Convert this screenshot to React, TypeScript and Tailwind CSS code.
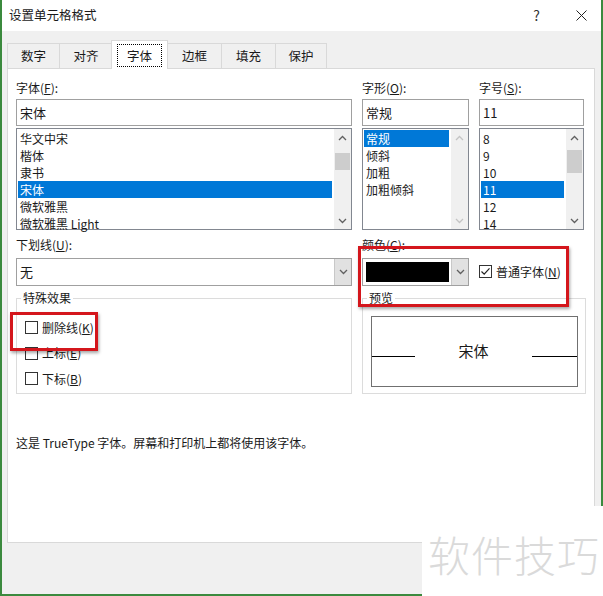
import React from 'react';

const FONT = "font-['Noto_Sans_CJK_SC',sans-serif]";

function Chevron({ up, enabled }: { up?: boolean; enabled: boolean }) {
  return (
    <svg width="9" height="6" viewBox="0 0 9 6" className="shrink-0">
      <polyline
        points={up ? '1,5 4.5,1.5 8,5' : '1,1 4.5,4.5 8,1'}
        fill="none"
        stroke={enabled ? '#606060' : '#c4c4c4'}
        strokeWidth="1.3"
      />
    </svg>
  );
}

function ScrollBar({ enabled, gap, thumb }: { enabled: boolean; gap: number; thumb: number }) {
  return (
    <div className="w-[17px] h-full bg-[#f0f0f0] flex flex-col">
      <div className="h-[17px] flex items-center justify-center">
        <Chevron up enabled={enabled} />
      </div>
      {enabled && (
        <>
          <div style={{ height: gap }} />
          <div className="mx-[1px] bg-[#cdcdcd]" style={{ height: thumb }} />
        </>
      )}
      <div className="flex-1" />
      <div className="h-[17px] flex items-center justify-center">
        <Chevron enabled={enabled} />
      </div>
    </div>
  );
}

function ListBox({
  items,
  selected,
  enabled,
  gap,
  thumb,
}: {
  items: string[];
  selected: number;
  enabled: boolean;
  gap: number;
  thumb: number;
}) {
  return (
    <div className="mt-[2px] h-[102px] border border-[#828790] bg-white flex">
      <div className="flex-1 pl-[1px] pr-[2px] pt-[1px]">
        {items.map((it, i) => (
          <div
            key={it}
            className={`h-[17px] pl-[2px] text-[12px] leading-[17px] whitespace-nowrap overflow-hidden ${
              i === selected ? 'bg-[#0078d7] text-white' : 'text-[#1a1a1a]'
            }`}
          >
            {it}
          </div>
        ))}
      </div>
      <ScrollBar enabled={enabled} gap={gap} thumb={thumb} />
    </div>
  );
}

function TextBox({ value }: { value: string }) {
  return (
    <div className="mt-[3px] h-[27px] border border-[#a0a0a0] bg-white pl-[3px] text-[13px] leading-[25px] text-[#1a1a1a]">
      {value}
    </div>
  );
}

function Label({ text, hot }: { text: string; hot: string }) {
  return (
    <div className="h-[16px] text-[12px] leading-[16px] text-[#1a1a1a] whitespace-nowrap">
      {text}(<span className="underline">{hot}</span>):
    </div>
  );
}

function CheckBox({ checked, text, hot, className }: { checked?: boolean; text: string; hot: string; className?: string }) {
  return (
    <div className={`h-[17px] flex items-center gap-[4px] text-[12px] text-[#1a1a1a] ${className ?? ''}`}>
      <div className="w-[13px] h-[13px] border border-[#333333] bg-white flex items-center justify-center">
        {checked && (
          <svg width="11" height="11" viewBox="0 0 11 11">
            <polyline points="1.5,5.5 4.2,8.2 9.5,2.3" fill="none" stroke="#222" strokeWidth="1.2" />
          </svg>
        )}
      </div>
      <span>
        {text}(<span className="underline">{hot}</span>)
      </span>
    </div>
  );
}

function DropArrow() {
  return (
    <div className="w-[17px] h-full bg-[#e1e1e1] border-l border-[#c8c8c8] flex items-center justify-center">
      <Chevron enabled />
    </div>
  );
}

const tabs = ['数字', '对齐', '字体', '边框', '填充', '保护'];
const tabWidths = [52, 53, 57, 54, 54, 52];

export default function App() {
  return (
    <div className={`relative w-[603px] h-[596px] bg-[#f0f0f0] border-x-2 border-b-2 border-[#3b8a3e] flex flex-col ${FONT}`}>
      {/* title bar */}
      <div className="h-[31px] bg-white flex items-center pl-[7px] pr-[14px]">
        <span className="text-[12.5px] text-[#1a1a1a]">设置单元格格式</span>
        <div className="flex-1" />
        <span className="text-[14px] text-[#333] mr-[36px]">?</span>
        <svg width="11" height="11" viewBox="0 0 11 11">
          <path d="M0.5 0.5 L10.5 10.5 M10.5 0.5 L0.5 10.5" stroke="#222" strokeWidth="1" />
        </svg>
      </div>

      {/* tabs */}
      <div className="mt-[12px] ml-[5px] h-[25px] flex items-end relative z-10">
        {tabs.map((t, i) =>
          i === 2 ? (
            <div
              key={t}
              style={{ width: tabWidths[i] }}
              className="h-[29px] -mb-[1px] -mx-[1px] bg-white border-x border-t border-[#d9d9d9] flex items-center justify-center"
            >
              <span className="border border-dotted border-black px-[9px] h-[23px] leading-[21px] text-[12.5px] text-[#1a1a1a]">
                {t}
              </span>
            </div>
          ) : (
            <div
              key={t}
              style={{ width: tabWidths[i] }}
              className={`h-[25px] border-t border-l border-[#d9d9d9] flex items-center justify-center text-[12.5px] text-[#1a1a1a] ${
                i === tabs.length - 1 ? 'border-r' : ''
              }`}
            >
              {t}
            </div>
          )
        )}
      </div>

      {/* panel */}
      <div className="ml-[5px] w-[588px] h-[475px] bg-white border border-[#d9d9d9] pl-[8px] pt-[11px]">
        <div className="flex gap-[10px]">
          <div className="w-[336px]">
            <Label text="字体" hot="F" />
            <TextBox value="宋体" />
            <ListBox
              items={['华文中宋', '楷体', '隶书', '宋体', '微软雅黑', '微软雅黑 Light']}
              selected={3}
              enabled
              gap={7}
              thumb={17}
            />
          </div>
          <div className="w-[107px]">
            <Label text="字形" hot="O" />
            <TextBox value="常规" />
            <ListBox items={['常规', '倾斜', '加粗', '加粗倾斜']} selected={0} enabled={false} gap={0} thumb={0} />
          </div>
          <div className="w-[105px]">
            <Label text="字号" hot="S" />
            <TextBox value="11" />
            <ListBox items={['8', '9', '10', '11', '12', '14']} selected={3} enabled gap={4} thumb={23} />
          </div>
        </div>

        <div className="mt-[7px] flex gap-[10px]">
          <div className="w-[336px]">
            <Label text="下划线" hot="U" />
            <div className="mt-[5px] h-[28px] border border-[#a0a0a0] bg-white flex">
              <div className="flex-1 pl-[3px] text-[13px] leading-[26px] text-[#1a1a1a]">无</div>
              <DropArrow />
            </div>
          </div>
          <div className="w-[107px]">
            <Label text="颜色" hot="C" />
            <div className="mt-[5px] h-[28px] border border-[#a0a0a0] bg-white flex">
              <div className="flex-1 p-[3px] pr-[2px]">
                <div className="w-full h-full bg-black" />
              </div>
              <DropArrow />
            </div>
          </div>
          <div className="w-[105px] flex items-end pb-[6px]">
            <CheckBox checked text="普通字体" hot="N" className="text-[12.5px]" />
          </div>
        </div>

        <div className="mt-[4px] flex gap-[10px]">
          <fieldset className="w-[336px] h-[104px] border border-[#dcdcdc]">
            <legend className="ml-[4px] px-[2px] text-[12px] leading-[16px] text-[#1a1a1a]">特殊效果</legend>
            <div className="pl-[8px] pt-[13px] flex flex-col gap-[8.5px]">
              <CheckBox text="删除线" hot="K" />
              <CheckBox text="上标" hot="E" />
              <CheckBox text="下标" hot="B" />
            </div>
          </fieldset>
          <fieldset className="w-[224px] h-[104px] border border-[#dcdcdc]">
            <legend className="ml-[4px] px-[2px] text-[12px] leading-[16px] text-[#1a1a1a]">预览</legend>
            <div className="ml-[8px] mt-[10px] w-[207px] h-[71px] border border-[#707070] flex items-center">
              <div className="w-[43px] h-[1px] bg-black mt-[10px]" />
              <div className="flex-1 text-center text-[15px] text-[#1a1a1a]">宋体</div>
              <div className="w-[45px] h-[1px] bg-black mt-[10px]" />
            </div>
          </fieldset>
        </div>

        <p className="mt-[41px] text-[12px] leading-[16px] text-[#1a1a1a]">
          这是 TrueType 字体。屏幕和打印机上都将使用该字体。
        </p>
      </div>

      {/* red highlight marks */}
      <div className="absolute left-[356px] top-[246px] w-[211px] h-[61px] border-[3px] border-[#d4161c] shadow-[1px_2px_3px_rgba(0,0,0,0.35)]" />
      <div className="absolute left-[8px] top-[312px] w-[88px] h-[39px] border-[3px] border-[#d4161c] shadow-[1px_2px_3px_rgba(0,0,0,0.35)]" />

      {/* watermark */}
      <div className="absolute left-[420px] top-[506px] w-[183px] h-[90px] bg-white flex items-center pl-[6px]">
        <span className="text-[42px] leading-[42px] tracking-[1px] text-[#dadada] font-extralight mt-[6px]">软件技巧</span>
      </div>
    </div>
  );
}
